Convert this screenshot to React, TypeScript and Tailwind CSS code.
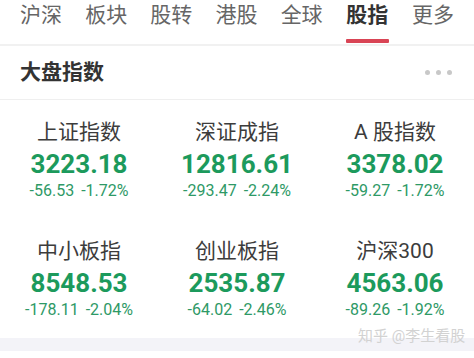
import React from "react";

const tabs = ["沪深", "板块", "股转", "港股", "全球", "股指", "更多"];
const items = [
  { name: "上证指数", value: "3223.18", chg: "-56.53", pct: "-1.72%" },
  { name: "深证成指", value: "12816.61", chg: "-293.47", pct: "-2.24%" },
  { name: "A 股指数", value: "3378.02", chg: "-59.27", pct: "-1.72%" },
  { name: "中小板指", value: "8548.53", chg: "-178.11", pct: "-2.04%" },
  { name: "创业板指", value: "2535.87", chg: "-64.02", pct: "-2.46%" },
  { name: "沪深300", value: "4563.06", chg: "-89.26", pct: "-1.92%" },
];

const font = { fontFamily: 'Roboto, "Noto Sans CJK SC", sans-serif' };

export default function App() {
  return (
    <div className="relative w-[474px] h-[358px] bg-white overflow-hidden" style={font}>
      <div className="flex justify-between px-[20px] h-[44px]">
        {tabs.map((t) => {
          const active = t === "股指";
          return (
            <div key={t} className="flex flex-col items-center pt-[1px]">
              <div
                className={
                  "text-[21px] leading-[28px] " +
                  (active ? "font-bold text-[#333333]" : "text-[#666666]")
                }
              >
                {t}
              </div>
              {active && <div className="mt-[10px] w-[43px] h-[4px] rounded-[1px] bg-[#d94455]" />}
            </div>
          );
        })}
      </div>
      <div className="h-[2px] bg-[#f1f1f1]" />
      <div className="flex items-center justify-between h-[54px] px-[20px] border-b border-[#efefef]">
        <div className="text-[21px] font-bold text-[#333333]">大盘指数</div>
        <div className="flex gap-[6px] mr-[2px]">
          <span className="w-[5px] h-[5px] rounded-full bg-[#c8c8c8]" />
          <span className="w-[5px] h-[5px] rounded-full bg-[#c8c8c8]" />
          <span className="w-[5px] h-[5px] rounded-full bg-[#c8c8c8]" />
        </div>
      </div>
      <div className="grid grid-cols-3">
        {items.map((it) => (
          <div key={it.name} className="flex flex-col items-center h-[119px] pt-[18px]">
            <div className="text-[21px] leading-[28px] text-[#3c3c3c]">{it.name}</div>
            <div className="mt-[3px] text-[26px] leading-[30px] font-bold text-[#1c9a5c]">{it.value}</div>
            <div className="mt-[2px] flex gap-[7px] text-[16px] leading-[20px] text-[#2e9966]">
              <span>{it.chg}</span>
              <span>{it.pct}</span>
            </div>
          </div>
        ))}
      </div>
      <div className="h-[13px] bg-[#f3f3f8]" />
      <div className="absolute left-[358px] top-[326px] text-[15px] leading-[20px] text-[#d2d2d2] whitespace-pre">
        知乎 @李生看股
      </div>
    </div>
  );
}
